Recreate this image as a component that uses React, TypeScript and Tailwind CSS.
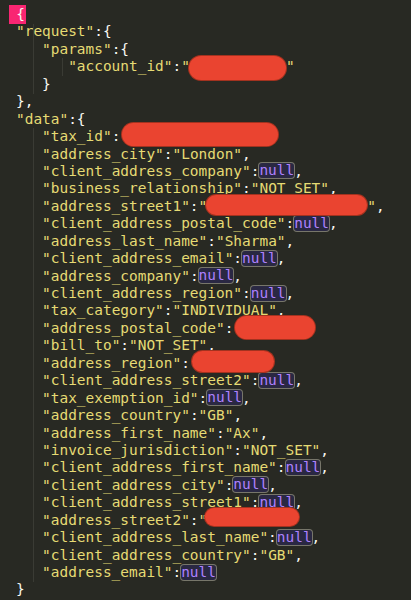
import type { ReactNode } from "react";

const K = ({ children }: { children: ReactNode }) => (
  <span className="text-[#e6db74]">{children}</span>
);

const P = ({ children }: { children: ReactNode }) => (
  <span className="text-[#f8f8f2]">{children}</span>
);

const Null = () => (
  <span className="inline-block align-top mt-[0.5px] h-[15px] leading-[15px] rounded-[3px] bg-[#2a2843] text-[#ae81ff] shadow-[0_0_0_1px_#77766a]">
    null
  </span>
);

// red redaction pill drawn over the value
const Blob = ({ className, fill }: { className: string; fill: string }) => (
  <span className={`relative inline-block h-[17px] align-top ${className}`}>
    <span className={`absolute inset-x-0 rounded-full bg-[#ea4430] shadow-[0_0_0_1px_#a3321f] ${fill}`} />
  </span>
);

const Line = ({ children }: { children: ReactNode }) => (
  <div className="h-[17.45px] leading-[17.45px] whitespace-pre">{children}</div>
);

const Row = ({ k, v }: { k: string; v: "null" | string }) => (
  <Line>
    {"   "}
    <K>"{k}"</K>
    <P>:</P>
    {v === "null" ? <Null /> : <K>"{v}"</K>}
    <P>,</P>
  </Line>
);

export default function App() {
  return (
    <div className="relative w-[411px] h-[600px] overflow-hidden bg-[#282923] pt-[6px] pl-[16px] text-[14.45px] font-['DejaVu_Sans_Mono',monospace]">
      {/* indent guides */}
      <div className="absolute left-[33px] top-[24px] h-[70px] w-px bg-[#3a3b34]" />
      <div className="absolute left-[33px] top-[128px] h-[454px] w-px bg-[#3a3b34]" />
      <div className="absolute left-[62px] top-[58px] h-[18px] w-px bg-[#3a3b34]" />

      <Line>
        <span className="-ml-[7px] inline-block w-[17px] h-[19px] align-top -mt-[1px] leading-[19px] bg-[#f92672] text-right pr-[1px] text-[#f8f8f2]">
          {"{"}
        </span>
      </Line>
      <Line>
        <K>"request"</K>
        <P>:{"{"}</P>
      </Line>
      <Line>
        {"   "}
        <K>"params"</K>
        <P>:{"{"}</P>
      </Line>
      <Line>
        {"      "}
        <K>"account_id"</K>
        <P>:</P>
        <K>"</K>
        <Blob className="w-[97px] -ml-[1px]" fill="-top-[2px] -bottom-[5px]" />
        <K>"</K>
      </Line>
      <Line>
        {"   "}
        <P>{"}"}</P>
      </Line>
      <Line>
        <P>{"},"}</P>
      </Line>
      <Line>
        <K>"data"</K>
        <P>:{"{"}</P>
      </Line>
      <Line>
        {"   "}
        <K>"tax_id"</K>
        <P>:</P>
        <Blob className="w-[156px] ml-[2px]" fill="-top-[5px] -bottom-[1px]" />
      </Line>
      <Row k="address_city" v="London" />
      <Row k="client_address_company" v="null" />
      <Row k="business_relationship" v="NOT_SET" />
      <Line>
        {"   "}
        <K>"address_street1"</K>
        <P>:</P>
        <K>"</K>
        <Blob className="w-[161px] -ml-[1px]" fill="-top-[3px] bottom-0" />
        <K>"</K>
        <P>,</P>
      </Line>
      <Row k="client_address_postal_code" v="null" />
      <Row k="address_last_name" v="Sharma" />
      <Row k="client_address_email" v="null" />
      <Row k="address_company" v="null" />
      <Row k="client_address_region" v="null" />
      <Row k="tax_category" v="INDIVIDUAL" />
      <Line>
        {"   "}
        <K>"address_postal_code"</K>
        <P>:</P>
        <Blob className="w-[80px] ml-[2px]" fill="-top-[4px] -bottom-[2px]" />
      </Line>
      <Row k="bill_to" v="NOT_SET" />
      <Line>
        {"   "}
        <K>"address_region"</K>
        <P>:</P>
        <Blob className="w-[82px] ml-[2px]" fill="-top-[4px] bottom-0" />
      </Line>
      <Row k="client_address_street2" v="null" />
      <Row k="tax_exemption_id" v="null" />
      <Row k="address_country" v="GB" />
      <Row k="address_first_name" v="Ax" />
      <Row k="invoice_jurisdiction" v="NOT_SET" />
      <Row k="client_address_first_name" v="null" />
      <Row k="client_address_city" v="null" />
      <Row k="client_address_street1" v="null" />
      <Line>
        {"   "}
        <K>"address_street2"</K>
        <P>:</P>
        <K>"</K>
        <Blob className="w-[94px] -ml-[2px]" fill="-top-[4px] bottom-[3px]" />
      </Line>
      <Row k="client_address_last_name" v="null" />
      <Row k="client_address_country" v="GB" />
      <Line>
        {"   "}
        <K>"address_email"</K>
        <P>:</P>
        <Null />
      </Line>
      <Line>
        <P>{"}"}</P>
      </Line>
    </div>
  );
}
